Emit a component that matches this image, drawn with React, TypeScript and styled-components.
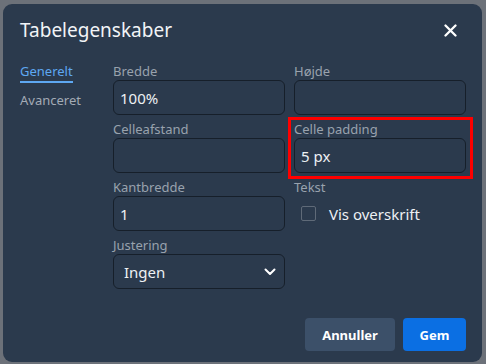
import styled, { createGlobalStyle } from 'styled-components';

const GlobalStyle = createGlobalStyle`
  html, body {
    margin: 0;
    padding: 0;
    background: #6c7179;
    font-family: 'Noto Sans', 'Open Sans', sans-serif;
  }
  * { box-sizing: border-box; }
`;

function App() {
  return (
    <>
      <GlobalStyle />
      <Backdrop>
        <Dialog>
          <Header>
            <Title>Tabelegenskaber</Title>
            <CloseButton aria-label="Luk">
              <svg width="13" height="13" viewBox="0 0 13 13">
                <path d="M1.5 1.5 L11.5 11.5 M11.5 1.5 L1.5 11.5" stroke="#ffffff" strokeWidth="2.3" strokeLinecap="round" />
              </svg>
            </CloseButton>
          </Header>

          <Body>
            <Nav>
              <Tab $active>Generelt</Tab>
              <Tab>Avanceret</Tab>
            </Nav>

            <Fields>
              <Field>
                <Label>Bredde</Label>
                <Input defaultValue="100%" />
              </Field>
              <Field>
                <Label>Højde</Label>
                <Input defaultValue="" />
              </Field>
              <Field>
                <Label>Celleafstand</Label>
                <Input defaultValue="" />
              </Field>
              <Field $highlight>
                <Label>Celle padding</Label>
                <Input defaultValue="5 px" />
              </Field>
              <Field>
                <Label>Kantbredde</Label>
                <Input defaultValue="1" />
              </Field>
              <Field>
                <Label>Tekst</Label>
                <CheckRow>
                  <CheckBox />
                  <CheckText>Vis overskrift</CheckText>
                </CheckRow>
              </Field>
              <Field>
                <Label>Justering</Label>
                <SelectBox>
                  <span>Ingen</span>
                  <svg width="12" height="8" viewBox="0 0 12 8">
                    <path d="M1.5 1.5 L6 6 L10.5 1.5" fill="none" stroke="#ffffff" strokeWidth="2" strokeLinecap="round" strokeLinejoin="round" />
                  </svg>
                </SelectBox>
              </Field>
            </Fields>
          </Body>

          <Footer>
            <SecondaryButton>Annuller</SecondaryButton>
            <PrimaryButton>Gem</PrimaryButton>
          </Footer>
        </Dialog>
      </Backdrop>
    </>
  );
}

export default App;

const Backdrop = styled.div`
  width: 486px;
  height: 364px;
  padding: 4px 4px 2px 3px;
`;

const Dialog = styled.div`
  display: flex;
  flex-direction: column;
  width: 479px;
  height: 358px;
  background: #2b3a4d;
  border-radius: 9px;
  padding: 11px 16px 11px 17px;
`;

const Header = styled.div`
  display: flex;
  align-items: center;
  justify-content: space-between;
  height: 30px;
`;

const Title = styled.h1`
  margin: 0;
  color: #f2f4f7;
  font-size: 19px;
  font-weight: 400;
  line-height: 30px;
`;

const CloseButton = styled.button`
  display: flex;
  align-items: center;
  justify-content: center;
  width: 24px;
  height: 24px;
  margin-right: 4px;
  padding: 0;
  border: none;
  background: transparent;
`;

const Body = styled.div`
  display: flex;
  margin-top: 18px;
`;

const Nav = styled.div`
  display: flex;
  flex-direction: column;
  width: 96px;
  gap: 9px;
`;

const Tab = styled.div<{ $active?: boolean }>`
  align-self: flex-start;
  color: ${(p) => (p.$active ? '#5ea8f2' : '#a3abb5')};
  font-size: 13px;
  line-height: 17px;
  padding-bottom: 1px;
  border-bottom: 2px solid ${(p) => (p.$active ? '#5ea8f2' : 'transparent')};
`;

const Fields = styled.div`
  display: grid;
  grid-template-columns: 172px 172px;
  column-gap: 9px;
  row-gap: 6px;
`;

const Field = styled.div<{ $highlight?: boolean }>`
  display: flex;
  flex-direction: column;
  position: relative;

  ${(p) =>
    p.$highlight &&
    `
    &::after {
      content: '';
      position: absolute;
      left: -6px;
      right: -7px;
      top: -4px;
      bottom: -6px;
      border: 3px solid #ff0000;
      pointer-events: none;
    }
  `}
`;

const Label = styled.label`
  color: #99a2ad;
  font-size: 13px;
  line-height: 17px;
`;

const Input = styled.input`
  width: 100%;
  height: 35px;
  padding: 0 6px;
  background: #2b3a4d;
  border: 1px solid #161f2a;
  border-radius: 6px;
  color: #eef1f4;
  font-family: 'Noto Sans', 'Open Sans', sans-serif;
  font-size: 15px;
  outline: none;
`;

const CheckRow = styled.div`
  display: flex;
  align-items: center;
  height: 35px;
  padding-left: 7px;
  gap: 13px;
`;

const CheckBox = styled.span`
  width: 15px;
  height: 15px;
  border: 1px solid #5f6a78;
  border-radius: 2px;
`;

const CheckText = styled.span`
  color: #eef1f4;
  font-size: 15px;
`;

const SelectBox = styled.div`
  display: flex;
  align-items: center;
  justify-content: space-between;
  height: 35px;
  padding: 0 8px 0 10px;
  border: 1px solid #161f2a;
  border-radius: 6px;
  color: #eef1f4;
  font-size: 15px;
`;

const Footer = styled.div`
  display: flex;
  justify-content: flex-end;
  gap: 8px;
  margin-top: auto;
`;

const BaseButton = styled.button`
  height: 33px;
  border: none;
  border-radius: 4px;
  color: #ffffff;
  font-family: 'Noto Sans', 'Open Sans', sans-serif;
  font-size: 13px;
  font-weight: 700;
`;

const SecondaryButton = styled(BaseButton)`
  width: 90px;
  background: #3c5069;
`;

const PrimaryButton = styled(BaseButton)`
  width: 63px;
  background: #0b6fe3;
`;
